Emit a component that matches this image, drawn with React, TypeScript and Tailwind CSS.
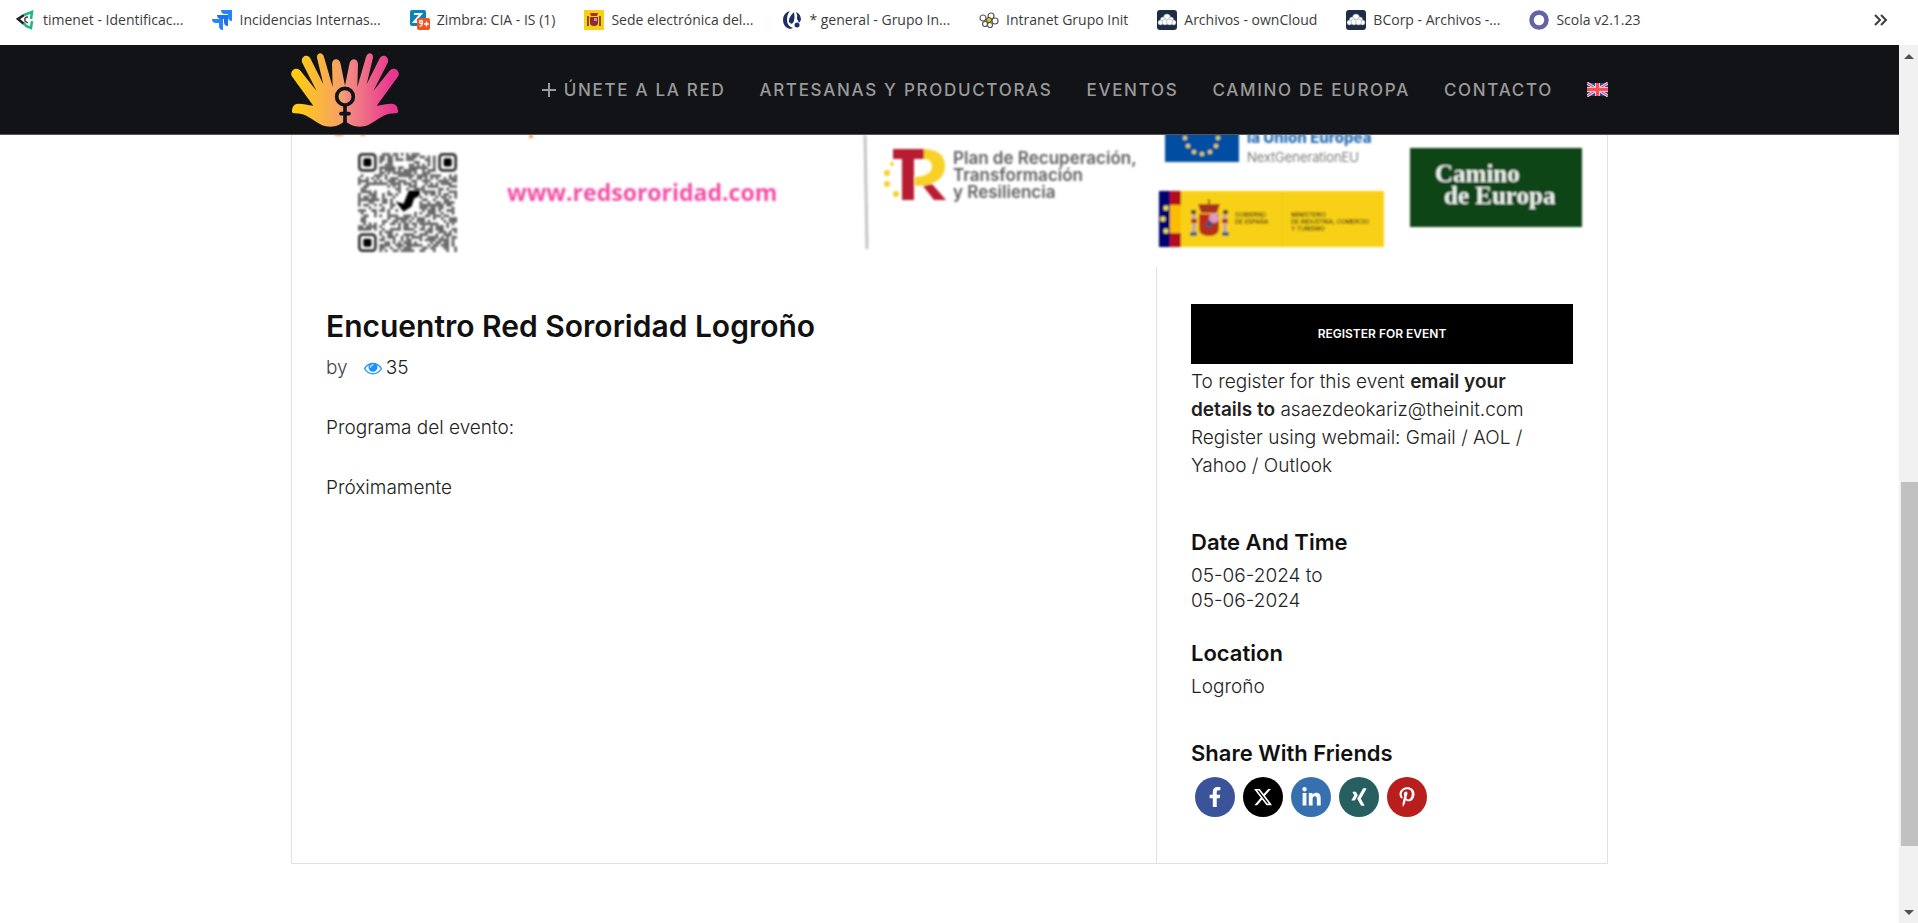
import type { ReactNode } from "react";
import { FaFacebookF, FaLinkedinIn, FaPinterestP, FaXing } from "react-icons/fa";
import { FaXTwitter } from "react-icons/fa6";

function CrestIcon() {
  return (
    <svg viewBox="0 0 20 20" className="w-5 h-5">
      <rect width="20" height="20" fill="#f8d117" />
      <path d="M6 3h8l-1 3H7z" fill="#a8321f" />
      <path d="M6 7h8v6q0 3-4 3t-4-3z" fill="#a3261e" />
      <path d="M3 6h2v9H3zM15 6h2v9h-2z" fill="#8a4a3a" />
      <path d="M10 8h3v3h-3z" fill="#c98bb0" />
      <path d="M8 11h3v2H8z" fill="#3b4a76" />
      <path d="M3 15h2v1H3zM15 15h2v1h-2z" fill="#3b5a86" />
    </svg>
  );
}

function CloudIcon() {
  return (
    <svg viewBox="0 0 20 20" className="w-5 h-5">
      <rect width="20" height="20" rx="3" fill="#1d2d44" />
      <g fill="#fff" stroke="#8a94a3" strokeWidth=".5">
        <circle cx="10" cy="7.500" r="3.500" />
        <circle cx="6" cy="9.500" r="2.500" />
        <circle cx="14" cy="9.500" r="2.500" />
        <circle cx="3.500" cy="12.500" r="2.500" />
        <circle cx="16.500" cy="12.500" r="2.500" />
        <circle cx="8" cy="12" r="3" />
        <circle cx="12.500" cy="12" r="3" />
      </g>
    </svg>
  );
}

const bookmarks: { label: string; icon: ReactNode }[] = [
  {
    label: "timenet - Identificac...",
    icon: (
      <svg viewBox="0 0 20 20" className="w-5 h-5" fill="none">
        <path d="M8 5 2 9l6 5" stroke="#222" strokeWidth="2.500" />
        <path d="M8 5l8-3-1 7M8 13l2 3 5 2 1-7" stroke="#1fb58a" strokeWidth="2.500" />
        <path d="M12 7q-4 0-3 4l3 2" stroke="#444" strokeWidth="1.500" />
      </svg>
    ),
  },
  {
    label: "Incidencias Internas...",
    icon: (
      <svg viewBox="0 0 20 20" className="w-5 h-5">
        <path d="M9 0h11v11q-4 0-4-4V4h-3q-4 0-4-4z" fill="#2684ff" />
        <path d="M5 5h11v11q-4 0-4-4V9H9q-4 0-4-4z" fill="#1f73ea" />
        <path d="M0 9h11v11q-4 0-4-4v-3H4q-4 0-4-4z" fill="#2684ff" />
      </svg>
    ),
  },
  {
    label: "Zimbra: CIA - IS (1)",
    icon: (
      <svg viewBox="0 0 20 20" className="w-5 h-5">
        <rect width="16" height="16" rx="2" fill="#0a84b8" />
        <path d="M4 4h7l-7 8h5" stroke="#fff" strokeWidth="2" fill="none" />
        <rect x="7" y="8" width="13" height="12" rx="2" fill="#f4511e" />
        <circle cx="11" cy="12" r="1.500" stroke="#fff" strokeWidth="1.300" fill="none" />
        <path d="M12.500 12q0 4-3 4.500M14 14h5M16.500 11.500v5" stroke="#fff" strokeWidth="1.300" fill="none" />
      </svg>
    ),
  },
  { label: "Sede electrónica del...", icon: <CrestIcon /> },
  {
    label: "* general - Grupo In...",
    icon: (
      <svg viewBox="0 0 20 20" className="w-5 h-5" fill="#1f2f63">
        <path d="M8 1Q1 3 1 10t7 9l3-1Q5 16 5 10t3-9z" />
        <path d="M12 2Q6 8 7 12q3 4 5-1 1-4 0-9z" />
        <path d="M14 2q5 2 5 8l-2 3q-1-3-2-4 1-4-1-7z" />
        <circle cx="15" cy="15" r="2.500" />
      </svg>
    ),
  },
  {
    label: "Intranet Grupo Init",
    icon: (
      <svg viewBox="0 0 20 20" className="w-5 h-5">
        <g stroke="#555" strokeWidth="1.200" fill="#fff">
          <circle cx="12" cy="6" r="3" />
          <circle cx="16" cy="11" r="3" />
          <circle cx="11" cy="15" r="2.500" />
          <circle cx="6" cy="14" r="2.500" />
          <circle cx="4" cy="8" r="3" />
        </g>
        <circle cx="10" cy="10" r="2.500" fill="#e8cc1a" stroke="#444" />
      </svg>
    ),
  },
  { label: "Archivos - ownCloud", icon: <CloudIcon /> },
  { label: "BCorp - Archivos -...", icon: <CloudIcon /> },
  {
    label: "Scola v2.1.23",
    icon: (
      <svg viewBox="0 0 20 20" className="w-5 h-5">
        <circle cx="10" cy="10" r="7.500" stroke="#6264a7" strokeWidth="4.500" fill="#fff" />
      </svg>
    ),
  },
];

function BookmarksBar() {
  return (
    <nav
      aria-label="Marcadores"
      className="h-[45px] shrink-0 pl-4 pr-[30px] pb-1.5 flex items-center justify-between bg-white text-sm text-[#3c3c3c] font-['Open_Sans',sans-serif]"
    >
      <ul className="flex items-center gap-[29px]">
        {bookmarks.map((bookmark) => (
          <li key={bookmark.label}>
            <a href="#" className="flex items-center gap-[7px] whitespace-nowrap">
              {bookmark.icon}
              {bookmark.label}
            </a>
          </li>
        ))}
      </ul>
      <button type="button" aria-label="Más marcadores">
        <svg viewBox="0 0 14 12" className="w-[14px] h-3" fill="none" stroke="#3c3c3c" strokeWidth="2">
          <path d="m1 1 5 5-5 5M7 1l5 5-5 5" />
        </svg>
      </button>
    </nav>
  );
}

const HAND =
  "M195 122 L182 58 C179 37 156 38 156 58 L158 126 L132 36 C127 19 110 23 111 38 L130 118 L92 42 C83 24 62 34 66 52 L110 138 L62 78 C50 62 28 76 35 93 L100 182 C85 180 70 176 55 176 C40 176 36 188 36 200 Q36 205 44 205 C80 205 95 225 125 240 C150 250 180 245 195 226 Z";

function Logo() {
  return (
    <svg viewBox="33 24 324 222" className="w-[108px] h-[74px]" role="img" aria-label="Red Sororidad">
      <defs>
        <linearGradient id="hand-left" gradientUnits="userSpaceOnUse" x1="33" y1="0" x2="195" y2="0">
          <stop offset="0.1" stopColor="#ffcc12" />
          <stop offset="1" stopColor="#f59d6e" />
        </linearGradient>
        <linearGradient id="hand-right" gradientUnits="userSpaceOnUse" x1="33" y1="0" x2="195" y2="0">
          <stop offset="0.1" stopColor="#e93490" />
          <stop offset="1" stopColor="#f29080" />
        </linearGradient>
      </defs>
      <path d={HAND} fill="url(#hand-left)" />
      <path d={HAND} fill="url(#hand-right)" transform="translate(390 0) scale(-1 1)" />
      <g stroke="#121316" fill="none" strokeLinecap="round">
        <circle cx="195" cy="155" r="25" strokeWidth="11" />
        <path d="M195 183v56" strokeWidth="11" />
        <path d="M183 206h24" strokeWidth="11" />
      </g>
    </svg>
  );
}

function UkFlag() {
  return (
    <svg viewBox="0 0 21 15" className="w-[21px] h-[15px]" role="img" aria-label="English">
      <rect y="1" width="21" height="13" fill="#0052b4" />
      <path d="m0 1 21 13M21 1 0 14" stroke="#f0e4ec" strokeWidth="3" />
      <path d="m0 1 21 13M21 1 0 14" stroke="#ff4b55" strokeWidth="1.200" />
      <path d="M10.500 1v13M0 7.500h21" stroke="#e8c4d4" strokeWidth="5" />
      <path d="M10.500 1v13M0 7.500h21" stroke="#ff4b55" strokeWidth="3" />
    </svg>
  );
}

const links = ["ARTESANAS Y PRODUCTORAS", "EVENTOS", "CAMINO DE EUROPA", "CONTACTO"];

function Header() {
  return (
    <header className="h-[90px] shrink-0 bg-[#121316] border-b border-[#55565a]">
      <div className="h-full w-full max-w-[1317px] mx-auto flex items-center justify-between">
        <a href="#">
          <Logo />
        </a>
        <nav className="flex items-center gap-[34px] text-[17px] leading-7 font-medium tracking-widest text-[#9a9a9b] whitespace-nowrap">
          <a href="#" className="flex items-center gap-2">
            <svg viewBox="0 0 14 14" className="w-[14px] h-[14px]" stroke="currentColor" strokeWidth="2">
              <path d="M7 0v14M0 7h14" />
            </svg>
            ÚNETE A LA RED
          </a>
          {links.map((link) => (
            <a key={link} href="#">
              {link}
            </a>
          ))}
          <a href="#">
            <UkFlag />
          </a>
        </nav>
      </div>
    </header>
  );
}

const QR_SIZE = 37;

// fixed pseudo random modules, leaving the finders and the middle free
const qrModules = Array.from({ length: QR_SIZE * QR_SIZE }, (_, i) => {
  const x = i % QR_SIZE;
  const y = Math.floor(i / QR_SIZE);
  const inFinder = (x < 8 && y < 8) || (x > 28 && y < 8) || (x < 8 && y > 28);
  const inMiddle = Math.hypot(x - 18, y - 18) < 5;
  const noise = Math.sin(x * 12.9898 + y * 78.233) * 43758.5453;
  const dark = noise - Math.floor(noise) > 0.5;
  return { x, y, dark: dark && !inFinder && !inMiddle };
}).filter((module) => module.dark);

function QrFinder({ x, y }: { x: number; y: number }) {
  return (
    <g transform={`translate(${x} ${y})`}>
      <rect x=".5" y=".5" width="6" height="6" rx="1.200" fill="none" stroke="#333" strokeWidth="1" />
      <rect x="2" y="2" width="3" height="3" rx=".6" fill="#000" />
    </g>
  );
}

function QrCode() {
  return (
    <g transform="translate(66 18) scale(2.676)">
      <g fill="#5a5a5a">
        {qrModules.map(({ x, y }) => (
          <rect key={`${x}-${y}`} x={x} y={y} width="1" height="1" />
        ))}
      </g>
      <QrFinder x={0} y={0} />
      <QrFinder x={30} y={0} />
      <QrFinder x={0} y={30} />
      <path d="m14 18 3 1 2-5h4v2l-2 1-1 3-3 2z" fill="#000" />
    </g>
  );
}

function Banner() {
  return (
    <svg viewBox="0 0 1315 132" className="block w-full font-[Inter,sans-serif]">
      <defs>
        <filter id="soft">
          <feGaussianBlur stdDeviation="0.8" />
        </filter>
      </defs>
      <g filter="url(#soft)">
        <g fill="#f59a55">
          <ellipse cx="47" cy="0" rx="5" ry="1" />
          <ellipse cx="71" cy="0" rx="3" ry="1" />
          <rect x="237" y="0" width="4" height="3" />
        </g>
        <QrCode />
        <text x="215" y="66" fontSize="23" fontWeight="700" fill="#f34fa5" className="font-['Open_Sans',sans-serif]">
          www.redsororidad.com
        </text>
        <path d="m573 0 2 114" stroke="#c4c4c4" strokeWidth="3" />

        <path d="M601 14h31v10h-10v41h-12V24h-9z" fill="#b81c30" />
        <path d="M632 14q21 1 21 17 0 19-30 20v-9q16-1 17-10 0-8-8-8z" fill="#f8d028" />
        <path d="m631 51 9-2 14 16h-12z" fill="#b81c30" />
        <g fill="#f8d028">
          <circle cx="600" cy="29" r="2" />
          <circle cx="595" cy="38" r="3" />
          <circle cx="595" cy="49" r="3" />
          <circle cx="604" cy="59" r="3" />
        </g>
        <text fontSize="17" fontWeight="600" fill="#5f5f5f">
          <tspan x="661" y="29">Plan de Recuperación,</tspan>
          <tspan x="661" y="46">Transformación</tspan>
          <tspan x="661" y="63">y Resiliencia</tspan>
        </text>

        <rect x="873" y="-10" width="74" height="37" fill="#034ea2" />
        <g fill="#f3e34a">
          <circle cx="893" cy="3" r="2" />
          <circle cx="896" cy="11" r="2" />
          <circle cx="902" cy="17" r="2" />
          <circle cx="910" cy="19" r="2" />
          <circle cx="918" cy="17" r="2" />
          <circle cx="924" cy="11" r="2" />
          <circle cx="926" cy="3" r="2" />
        </g>
        <text x="955" y="8" fontSize="15" fontWeight="800" fill="#2a6db5">
          la Unión Europea
        </text>
        <text x="955" y="27" fontSize="13" fontWeight="300" fill="#555">
          NextGenerationEU
        </text>

        <rect x="867" y="56" width="225" height="56" fill="#f8d117" />
        <rect x="867" y="56" width="11" height="56" fill="#05056e" />
        <rect x="878" y="56" width="11" height="56" fill="#b3101c" />
        <rect x="878" y="70" width="11" height="28" fill="#fdbc00" />
        <g fill="#f3e34a">
          <circle cx="874" cy="73" r="2.500" />
          <circle cx="871" cy="84" r="2.500" />
          <circle cx="874" cy="96" r="2.500" />
        </g>
        <g>
          <path d="M906 69h22l-3 9h-16z" fill="#a8321f" />
          <path d="M916 64h2v6h-2z" fill="#76701f" />
          <path d="M907 79h20v14q0 8-10 8t-10-8z" fill="#b3301a" />
          <path d="M907 79h10v9h-10z" fill="#c2261e" />
          <circle cx="922" cy="83" r="5" fill="#dc9cc0" />
          <circle cx="917" cy="89" r="3" fill="#35508c" />
          <path d="M900 76h4v22h-4zM931 76h4v22h-4z" fill="#c9a59a" />
          <path d="M899 75h5v4h-5zM931 75h5v4h-5z" fill="#5c4516" />
          <path d="M899 84h6v4h-6zM930 84h6v4h-6z" fill="#b3261e" />
          <path d="M898 97h7v4h-7zM930 97h7v4h-7z" fill="#486a78" />
        </g>
        <g fontSize="6" fontWeight="600" fill="#5b4d10">
          <text>
            <tspan x="943" y="82">GOBIERNO</tspan>
            <tspan x="943" y="89">DE ESPAÑA</tspan>
          </text>
          <text>
            <tspan x="999" y="82">MINISTERIO</tspan>
            <tspan x="999" y="89">DE INDUSTRIA, COMERCIO</tspan>
            <tspan x="999" y="96">Y TURISMO</tspan>
          </text>
        </g>
        <path d="M990 56v56" stroke="#eec613" />

        <rect x="1118" y="13" width="172" height="79" fill="#0c4418" />
        <text fontSize="25" fontWeight="700" fill="#eef3ee" className="font-['Liberation_Serif',serif]">
          <tspan x="1143" y="47">Camino</tspan>
          <tspan x="1152" y="69">de Europa</tspan>
        </text>
      </g>
    </svg>
  );
}

function EyeIcon() {
  return (
    <svg viewBox="0 0 1792 1792" className="w-[18px] h-[18px]" fill="#1e90ff">
      <path d="M1664 960q-152-236-381-353 61 104 61 225 0 185-131.500 316.500t-316.500 131.500-316.500-131.500-131.500-316.500q0-121 61-225-229 117-381 353 133 205 333.500 326.500t434.500 121.500 434.500-121.500 333.500-326.500zm-720-384q0-20-14-34t-34-14q-125 0-214.500 89.500t-89.500 214.500q0 20 14 34t34 14 34-14 14-34q0-86 61-147t147-61q20 0 34-14t14-34zm848 384q0 34-20 69-140 230-376.500 368.500t-499.500 138.500-499.500-139-376.500-368q-20-35-20-69t20-69q140-229 376.500-368t499.500-139 499.500 139 376.500 368q20 35 20 69z" />
    </svg>
  );
}

const socials = [
  { name: "Facebook", color: "bg-[#3b5399]", icon: <FaFacebookF size={20} /> },
  { name: "X", color: "bg-black", icon: <FaXTwitter size={20} /> },
  { name: "LinkedIn", color: "bg-[#3770b0]", icon: <FaLinkedinIn size={21} /> },
  { name: "Xing", color: "bg-[#275f61]", icon: <FaXing size={20} /> },
  { name: "Pinterest", color: "bg-[#b81e1c]", icon: <FaPinterestP size={20} /> },
];

function EventDetails() {
  return (
    <section className="flex-1 px-[34px] pt-[41px] text-[19px] leading-7 font-light">
      <h1 className="text-[30px] leading-9 font-semibold text-[#111]">
        Encuentro Red Sororidad Logroño
      </h1>
      <p className="mt-2.5 flex items-center text-[#444]">
        by
        <span className="ml-4 flex items-center gap-1 text-[#222]">
          <EyeIcon />
          35
        </span>
      </p>
      <p className="mt-8">Programa del evento:</p>
      <p className="mt-8">Próximamente</p>
    </section>
  );
}

function EventSidebar() {
  return (
    <aside className="w-[451px] shrink-0 border-l border-[#e1e1e1] px-[34px] pt-[37px] pb-[46px] text-[19px] leading-[25px] font-light">
      <button type="button" className="w-full h-[60px] bg-black text-white text-xs font-semibold">
        REGISTER FOR EVENT
      </button>
      <p className="mt-1 leading-7">
        To register for this event <strong className="font-semibold">email your</strong>
        <br />
        <strong className="font-semibold">details to</strong> <a href="#">asaezdeokariz@theinit.com</a>
        <br />
        Register using webmail: <a href="#">Gmail</a> / <a href="#">AOL</a> /
        <br />
        <a href="#">Yahoo</a> / <a href="#">Outlook</a>
      </p>
      <h2 className="mt-12 text-[22px] leading-7 font-semibold text-[#111]">Date And Time</h2>
      <p className="mt-[7px]">
        05-06-2024 to
        <br />
        05-06-2024
      </p>
      <h2 className="mt-[26px] text-[22px] leading-7 font-semibold text-[#111]">Location</h2>
      <p className="mt-[7px]">Logroño</p>
      <h2 className="mt-10 text-[22px] leading-7 font-semibold text-[#111]">Share With Friends</h2>
      <ul className="mt-2.5 ml-1 flex gap-2">
        {socials.map((social) => (
          <li key={social.name}>
            <a
              href="#"
              aria-label={social.name}
              className={`w-10 h-10 rounded-full flex items-center justify-center text-white ${social.color}`}
            >
              {social.icon}
            </a>
          </li>
        ))}
      </ul>
    </aside>
  );
}

function Scrollbar() {
  return (
    <div className="w-[19px] shrink-0 bg-[#f1f1f1] flex flex-col items-end" aria-hidden="true">
      <svg viewBox="0 0 19 21" className="w-[19px] h-[21px]" fill="#505050">
        <path d="m5 14 5-5 5 5z" />
      </svg>
      <div className="flex-[416]" />
      <div className="flex-[364] w-[17px] bg-[#c1c1c1]" />
      <div className="flex-[56]" />
      <svg viewBox="0 0 19 21" className="w-[19px] h-[21px]" fill="#505050">
        <path d="m5 8 5 5 5-5z" />
      </svg>
    </div>
  );
}

export default function App() {
  return (
    <div className="h-screen flex flex-col overflow-hidden bg-white text-[#222] font-[Inter,sans-serif]">
      <BookmarksBar />
      <div className="flex-1 min-h-0 flex">
        <div className="flex-1 min-w-0 flex flex-col">
          <Header />
          <main className="w-full max-w-[1317px] mx-auto border-x border-b border-[#e1e1e1]">
            <Banner />
            <div className="flex">
              <EventDetails />
              <EventSidebar />
            </div>
          </main>
        </div>
        <Scrollbar />
      </div>
    </div>
  );
}
